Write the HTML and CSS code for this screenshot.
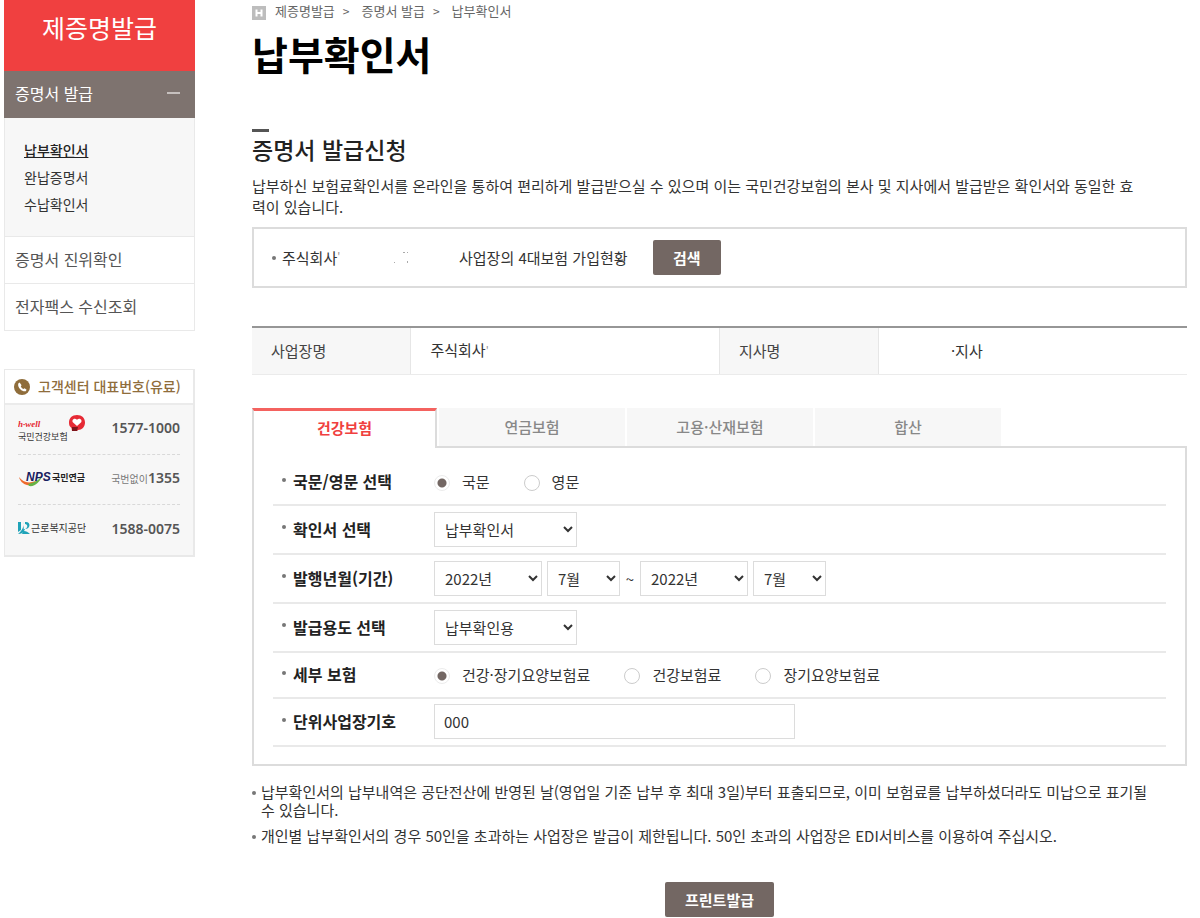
FILE: index.html
```html
<!DOCTYPE html>
<html lang="ko">
<head>
<meta charset="utf-8">
<meta name="viewport" content="width=device-width, initial-scale=1">
<title>납부확인서</title>
<link rel="stylesheet" href="styles.css">
</head>
<body>
<div class="page">
  <aside class="sidebar">
    <nav class="menu">
      <h2 class="menu-title">제증명발급</h2>
      <a class="menu-item menu-item-open" href="#">증명서 발급<span class="minus"></span></a>
      <ul class="submenu">
        <li><a class="current" href="#">납부확인서</a></li>
        <li><a href="#">완납증명서</a></li>
        <li><a href="#">수납확인서</a></li>
      </ul>
      <a class="menu-item" href="#">증명서 진위확인</a>
      <a class="menu-item" href="#">전자팩스 수신조회</a>
    </nav>
    <section class="contact">
      <h3 class="contact-title">
        <svg width="16" height="16" viewBox="0 0 16 16" aria-hidden="true"><circle cx="8" cy="8" r="8" fill="#8f6d3b"/><path d="M5.600 3.600 4.300 4.500c-.6 1.800.3 4.100 2 5.800s3.700 2.300 5.400 1.900l.9-1.500-2-1.500-1.200.9c-1.300-.5-2.200-1.600-2.600-2.800l.8-1z" fill="#fff"/></svg>
        고객센터 대표번호(유료)
      </h3>
      <ul class="contact-list">
        <li>
          <svg width="68" height="28" viewBox="0 0 68 28" role="img" aria-label="국민건강보험">
            <path fill-rule="evenodd" d="M59 1c5 0 8 3 8 7.500S64 16 60 16l-1 1h-5l-.5-3C51.500 12.500 51 11 51 8.500 51 4 54 1 59 1z" fill="#e62a35"/>
            <path d="M54 13h6l-1 4h-5z" fill="#7d141b"/>
            <path d="M59 12 54.800 8.200c-1.400-2.200 1.700-4.900 4.200-2.500 2.500-2.400 5.600.3 4.200 2.500z" fill="#fff"/>
            <text class="logo-well" x="0" y="13">h·well</text>
            <text class="logo-name" x="0" y="26">국민건강보험</text>
          </svg>
          <strong>1577-1000</strong>
        </li>
        <li>
          <svg width="68" height="18" viewBox="0 0 68 18" role="img" aria-label="NPS 국민연금">
            <path d="M1 8c3 4 8 6.500 13 5l4-1c-2 4-6 5-9 4C5 15 2 12 1 8z" fill="#ef6a2d"/>
            <path d="M10 15c5-1 10-3 14-8-2 6-7 11-13 10z" fill="#67b345"/>
            <text class="logo-nps" x="8" y="12">NPS</text>
            <text class="logo-pension" x="34" y="12">국민연금</text>
          </svg>
          <span class="phone"><small>국번없이</small><strong>1355</strong></span>
        </li>
        <li>
          <svg width="68" height="16" viewBox="0 0 68 16" role="img" aria-label="근로복지공단">
            <path d="M0 2h3v8l-3 2z" fill="#1fa3b8"/>
            <path d="M5 2c1 4 0 8-5 12 3 0 5-1 6-3z" fill="#1fa3b8"/>
            <path d="M7 2c6-1 6 7 0 7l-1 2c2 0 4 1 6 3H4l2-5h1c3-1 3-5 0-5z" fill="#1fa3b8"/>
            <text class="logo-welfare" x="13" y="12">근로복지공단</text>
          </svg>
          <strong>1588-0075</strong>
        </li>
      </ul>
    </section>
  </aside>

  <main class="content">
    <nav class="breadcrumb" aria-label="현재 위치">
      <svg width="14" height="14" viewBox="0 0 14 14" aria-hidden="true"><path fill="#bdbdbd" d="M0 0h14v14H0z"/><path d="M4.500 3.500v7M9.500 3.500v7M4.500 7h5" stroke="#fff" stroke-width="2"/></svg>
      <a href="#">제증명발급</a><span class="sep">&gt;</span><a href="#">증명서 발급</a><span class="sep">&gt;</span><span>납부확인서</span>
    </nav>
    <h1 class="page-title">납부확인서</h1>

    <h2 class="section-title">증명서 발급신청</h2>
    <p class="intro">납부하신 보험료확인서를 온라인을 통하여 편리하게 발급받으실 수 있으며 이는 국민건강보험의 본사 및 지사에서 발급받은 확인서와 동일한 효<br>력이 있습니다.</p>

    <div class="search-box">
      <span class="company">주식회사<span class="tick">'</span></span>
      <svg class="remnant" width="16" height="14" viewBox="0 0 16 14" aria-hidden="true"><path d="M0 11h1v1H0zM9 1h2v1H9zM13 1h1v1h-1zM13 10h1v2h-1z" fill="#aaa"/></svg>
      <span class="search-text">사업장의 4대보험 가입현황</span>
      <button class="button" type="button">검색</button>
    </div>

    <table class="info">
      <tbody>
        <tr>
          <th scope="row">사업장명</th>
          <td>주식회사<span class="tick">'</span></td>
          <th scope="row">지사명</th>
          <td class="branch">·지사</td>
        </tr>
      </tbody>
    </table>

    <div class="tabs" role="tablist">
      <button class="tab tab-active" type="button" role="tab" aria-selected="true">건강보험</button>
      <button class="tab" type="button" role="tab" aria-selected="false">연금보험</button>
      <button class="tab" type="button" role="tab" aria-selected="false">고용·산재보험</button>
      <button class="tab" type="button" role="tab" aria-selected="false">합산</button>
    </div>
    <form class="panel">
      <div class="row row-radio" role="radiogroup" aria-labelledby="lang-label">
        <span class="label" id="lang-label">국문/영문 선택</span>
        <div class="options">
          <label class="option"><input type="radio" name="lang" checked>국문</label>
          <label class="option"><input type="radio" name="lang">영문</label>
        </div>
      </div>
      <div class="row">
        <label class="label" for="doc">확인서 선택</label>
        <div class="fields"><select class="wide" id="doc"><option>납부확인서</option></select></div>
      </div>
      <div class="row">
        <label class="label" for="from-year">발행년월(기간)</label>
        <div class="fields">
          <select class="year" id="from-year"><option>2022년</option></select>
          <select class="month" aria-label="시작 월"><option>7월</option></select>
          <span class="tilde">~</span>
          <select class="year" aria-label="종료 년"><option>2022년</option></select>
          <select class="month" aria-label="종료 월"><option>7월</option></select>
        </div>
      </div>
      <div class="row">
        <label class="label" for="purpose">발급용도 선택</label>
        <div class="fields"><select class="wide" id="purpose"><option>납부확인용</option></select></div>
      </div>
      <div class="row row-radio" role="radiogroup" aria-labelledby="kind-label">
        <span class="label" id="kind-label">세부 보험</span>
        <div class="options">
          <label class="option"><input type="radio" name="kind" checked>건강·장기요양보험료</label>
          <label class="option"><input type="radio" name="kind">건강보험료</label>
          <label class="option"><input type="radio" name="kind">장기요양보험료</label>
        </div>
      </div>
      <div class="row row-last">
        <label class="label" for="unit">단위사업장기호</label>
        <div class="fields"><input class="unit" id="unit" type="text" value="000"></div>
      </div>
    </form>

    <ul class="notes">
      <li>납부확인서의 납부내역은 공단전산에 반영된 날(영업일 기준 납부 후 최대 3일)부터 표출되므로, 이미 보험료를 납부하셨더라도 미납으로 표기될<br>수 있습니다.</li>
      <li>개인별 납부확인서의 경우 50인을 초과하는 사업장은 발급이 제한됩니다. 50인 초과의 사업장은 EDI서비스를 이용하여 주십시오.</li>
    </ul>
    <div class="actions"><button class="button" type="button">프린트발급</button></div>
  </main>
</div>
</body>
</html>
```
FILE: styles.css
```css
* { box-sizing: border-box; }
body {
  margin: 0;
  background: #fff;
  color: #333;
  font: 15px/21px "Noto Sans CJK KR", "Noto Sans", sans-serif;
}
h1, h2, h3, p, ul { margin: 0; padding: 0; }
ul { list-style: none; }
a { color: inherit; text-decoration: none; }
button, select, input { font: inherit; }

.page { display: flex; gap: 57px; padding: 0 13px 0 4px; }

/* Sidebar */
.sidebar { flex: 0 0 191px; }
.menu-title {
  height: 71px;
  background: #f04040;
  color: #fff;
  font-size: 25px;
  font-weight: 400;
  line-height: 54px;
  text-align: center;
}
.menu-item {
  display: flex;
  align-items: center;
  justify-content: space-between;
  height: 47px;
  padding: 0 14px 2px 10px;
  border: 1px solid #e9e9e9;
  border-top: 0;
  color: #555;
  font-size: 16px;
}
.menu-item-open { border-color: #7e736f; background: #7e736f; color: #fff; }
.minus { width: 13px; height: 2px; background: #c6c0be; }
.submenu {
  height: 119px;
  padding: 19px 19px 0;
  border: 1px solid #e9e9e9;
  border-top: 0;
  background: #f7f7f7;
  font-size: 14px;
  line-height: 27px;
}
.current { font-weight: 500; text-decoration: underline; color: #222; }

.contact { margin-top: 38px; border: 1px solid #e9e9e9; border-width: 1px 2px 2px 1px; background: #f7f7f7; }
.contact-title {
  display: flex;
  align-items: center;
  gap: 8px;
  height: 35px;
  padding-left: 9px;
  border-bottom: 2px solid #ebebeb;
  background: #fff;
  color: #8f6d3b;
  font-size: 14px;
  font-weight: 500;
  white-space: nowrap;
}
.contact-list { padding: 0 13px; }
.contact-list li {
  display: flex;
  align-items: center;
  justify-content: space-between;
  height: 50px;
  padding-bottom: 4px;
  border-bottom: 1px dashed #d9d9d9;
}
.contact-list li:last-child { border-bottom: 0; }
.contact-list strong { color: #555; font-family: "Noto Sans", sans-serif; font-size: 14px; font-weight: 600; }
.contact-list small { color: #777; font-size: 10px; }
.phone { white-space: nowrap; }
.logo-well { font: italic 700 9px "Liberation Serif", serif; fill: #e62a35; }
.logo-name { font-size: 9px; fill: #333; }
.logo-welfare { font-size: 10px; fill: #333; }
.logo-nps { font: italic 700 12px "Liberation Sans", sans-serif; fill: #18205f; }
.logo-pension { font-size: 9px; font-weight: 700; fill: #222; }

/* Content */
.content { flex: 1; min-width: 0; }
.breadcrumb { display: flex; align-items: center; height: 21px; color: #666; font-size: 13px; }
.breadcrumb svg { margin: 4px 9px 0 0; }
.sep { margin: 0 12px 0 8px; font-size: 12px; }
.page-title { color: #000; font-size: 39px; line-height: 65px; }
.section-title { margin-top: 43px; color: #222; font-size: 23px; font-weight: 500; line-height: 34px; }
.section-title::before { content: ""; display: block; width: 17px; height: 3px; background: #555; }
.intro { margin-top: 9px; white-space: nowrap; }

.search-box {
  display: flex;
  align-items: center;
  height: 61px;
  margin-top: 10px;
  padding: 0 18px;
  border: 2px solid #dcdcdc;
}
.company::before, .label::before, .notes li::before {
  content: "";
  width: 4px;
  height: 4px;
  border-radius: 50%;
  background: #777;
}
.company { display: flex; align-items: center; gap: 6px; width: 122px; }
.company .tick { margin-left: -6px; }
.tick { color: #999; font-size: 11px; }
.remnant { margin-right: 49px; }
.search-text { min-width: 194px; }
.button {
  height: 35px;
  padding: 0 20px;
  border: 0;
  border-radius: 2px;
  background: #736763;
  color: #fff;
  font-weight: 700;
}

.info { width: 100%; margin-top: 38px; border-top: 2px solid #969696; border-collapse: collapse; table-layout: fixed; }
.info th, .info td { width: 33%; height: 47px; padding: 0 19px; border-bottom: 1px solid #ebebeb; font-weight: 400; text-align: left; }
.info th { width: 17%; border-right: 1px solid #e6e6e6; background: #f7f7f7; color: #444; }
.info td + th { border-left: 1px solid #e6e6e6; }
.info .branch { padding-left: 72px; }

.tabs { position: relative; display: flex; gap: 2px; height: 40px; margin: 33px 0 -2px; }
.tab {
  flex: 0 1 186px;
  margin-bottom: 2px;
  border: 0;
  background: #f7f7f7;
  color: #888;
  font-weight: 500;
}
.tab-active {
  flex-basis: 185px;
  margin-bottom: 0;
  padding-bottom: 5px;
  border: 2px solid #dcdcdc;
  border-width: 3px 2px 0;
  border-top-color: #f4625f;
  background: #fff;
  color: #f04040;
  font-weight: 700;
}
.panel { padding: 12px 19px 17px; border: 2px solid #dcdcdc; }
.row { display: flex; align-items: center; height: 49px; border-bottom: 2px solid #e9e9e9; }
.row-radio { height: 46px; }
.row-last { height: 48px; }
.label { display: flex; align-items: center; gap: 7px; flex: 0 0 161px; padding-left: 9px; color: #222; font-size: 16px; font-weight: 700; }
.label::before { margin-bottom: 4px; }
.fields { display: flex; align-items: center; gap: 5px; }
select, .unit { height: 35px; border: 1px solid #dcdcdc; border-radius: 0; background: #fff; color: #333; }
select { padding: 0 6px; }
.wide { width: 143px; }
.year { width: 108px; }
.month { width: 73px; }
.tilde { width: 10px; text-align: center; }
.unit { width: 361px; padding: 0 9px; }
.options { display: flex; gap: 34px; }
.option { display: flex; align-items: center; gap: 12px; }
.option input {
  appearance: none;
  width: 16px;
  height: 16px;
  margin: 2px 0 0;
  border: 1px solid #ccc;
  border-radius: 50%;
  background: #fff;
}
.option input:checked { border-color: #ececec; background: radial-gradient(circle, #736763 4px, #fff 5px); }

.notes { margin-top: 17px; line-height: 18px; white-space: nowrap; }
.notes li { position: relative; padding-left: 9px; }
.notes li + li { margin-top: 8px; }
.notes li::before { position: absolute; top: 8px; left: 0; }
.actions { margin-top: 37px; text-align: center; }
```
